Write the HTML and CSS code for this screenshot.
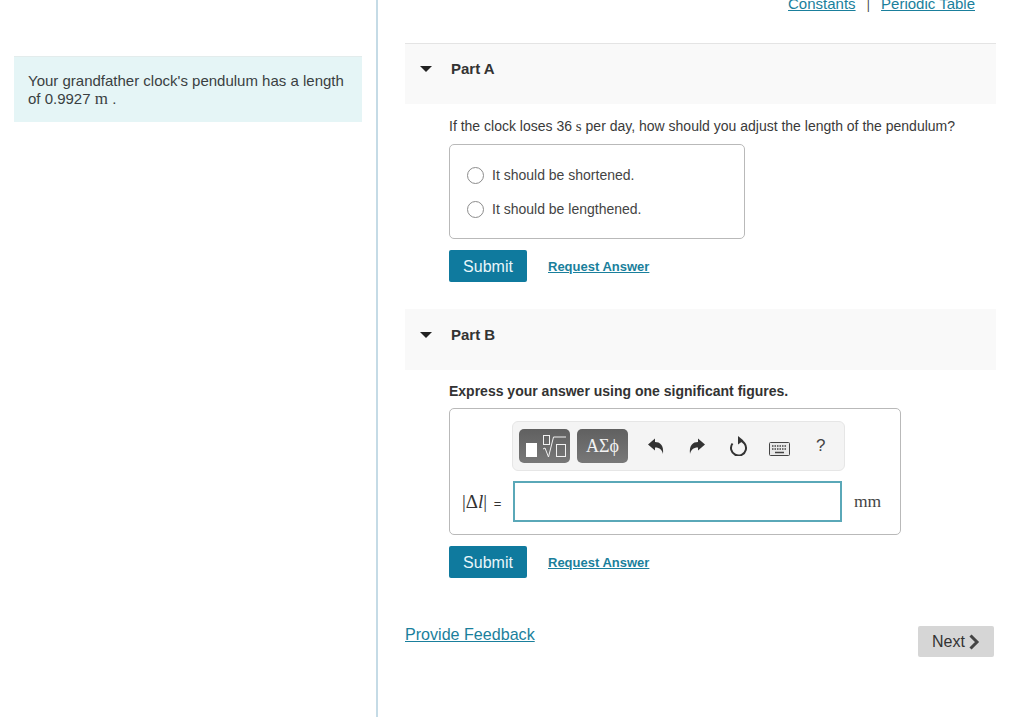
FILE: index.html
```html
<!DOCTYPE html>
<html lang="en">
<head>
    <meta charset="UTF-8">
    <title>Pendulum</title>
    <link rel="stylesheet" href="styles.css">
</head>
<body>
    <div class="container">
        <div class="left-col">
            <div class="intro">Your grandfather clock's pendulum has a length of 0.9927 <span class="math">m</span> .</div>
        </div>
        <div class="right-col">
            <div class="top-links">
                <a href="#">Constants</a>
                <span class="sep">|</span>
                <a href="#">Periodic Table</a>
            </div>

            <div class="part-head">
                <span class="caret"></span>
                <span class="part-title">Part A</span>
            </div>
            <div class="part-body">
                <p class="question">If the clock loses 36 <span class="math">s</span> per day, how should you adjust the length of the pendulum?</p>
                <div class="choices">
                    <label class="choice"><span class="radio"></span>It should be shortened.</label>
                    <label class="choice"><span class="radio"></span>It should be lengthened.</label>
                </div>
                <div class="actions">
                    <button class="submit">Submit</button>
                    <a class="request" href="#">Request Answer</a>
                </div>
            </div>

            <div class="part-head part-b">
                <span class="caret"></span>
                <span class="part-title">Part B</span>
            </div>
            <div class="part-body">
                <p class="express">Express your answer using one significant figures.</p>
                <div class="answer-box">
                    <div class="toolbar">
                        <span class="tool-btn">
                            <svg width="51" height="34" viewBox="0 0 51 34">
                                <rect x="7" y="14" width="11" height="14" fill="#fff"/>
                                <rect x="24.500" y="6.500" width="6" height="9" fill="none" stroke="#f2f2f2"/>
                                <path d="M24 20l2-1l3.500 9l5-20h12.500" fill="none" stroke="#f2f2f2"/>
                                <rect x="37.500" y="15.500" width="9" height="12" fill="none" stroke="#f2f2f2"/>
                            </svg>
                        </span>
                        <span class="tool-btn tool-greek">ΑΣϕ</span>
                        <svg class="tool-undo" width="16" height="17" viewBox="0 0 16 17">
                            <path d="M0 6.500l7-6v3.500c5 0 9 3 8 12c-1-4-3-6.500-8-6.500v3z" fill="#333"/>
                        </svg>
                        <svg class="tool-redo" width="16" height="17" viewBox="0 0 16 17">
                            <path d="M16 6.500l-7-6v3.500c-5 0-9 3-8 12c1-4 3-6.500 8-6.500v3z" fill="#333"/>
                        </svg>
                        <svg class="tool-reload" width="19" height="20" viewBox="0 0 19 20">
                            <path d="M3.500 7.500A7.500 7.500 0 1 0 10 4.500" fill="none" stroke="#333" stroke-width="2"/>
                            <path d="M9 0l5.500 4.500l-5.500 4z" fill="#333"/>
                        </svg>
                        <svg class="tool-keys" width="21" height="14" viewBox="0 0 21 14">
                            <rect x="0.500" y="0.500" width="20" height="13" rx="1" fill="#e9e9e9" stroke="#444"/>
                            <path d="M3 4h15M3 7h15" stroke="#444" stroke-width="1.500" stroke-dasharray="1.500 1"/>
                            <path d="M6 10.500h9" stroke="#444" stroke-width="1.500"/>
                        </svg>
                        <span class="tool-help">?</span>
                    </div>
                    <div class="answer-row">
                        <span class="answer-label"><span class="math">|Δ<i>l</i>|</span> =</span>
                        <div class="answer-input"></div>
                        <span class="math unit">mm</span>
                    </div>
                </div>
                <div class="actions">
                    <button class="submit">Submit</button>
                    <a class="request" href="#">Request Answer</a>
                </div>
            </div>

            <div class="footer">
                <a class="feedback" href="#">Provide Feedback</a>
                <button class="next">Next
                    <svg width="12" height="16" viewBox="0 0 12 16">
                        <path d="M2.500 1.500l6.500 6.500l-6.500 6.500" fill="none" stroke="#444" stroke-width="3"/>
                    </svg>
                </button>
            </div>
        </div>
    </div>
</body>
</html>
```

FILE: styles.css
```css
* {
    box-sizing: border-box;
}
html, body {
    margin: 0;
    height: 717px;
    overflow: hidden;
    background: #fff;
}
body {
    font-family: "Liberation Sans", Arial, sans-serif;
    font-size: 14px;
    color: #333;
}
a {
    color: #1a7f9c;
}
.math {
    font-family: "Liberation Serif", "DejaVu Serif", serif;
}
.container {
    display: grid;
    grid-template-columns: 378px 1fr;
    height: 717px;
}
.left-col {
    border-right: 2px solid #c5dbe6;
    padding: 56px 14px 0;
}
.intro {
    background: #e5f5f6;
    border-top: 1px solid #e3ecec;
    width: 348px;
    height: 66px;
    padding: 15px 14px 0;
    font-size: 15px;
    line-height: 18px;
    color: #3a3f42;
}
.intro .math {
    font-size: 17px;
}
.right-col {
    padding: 0 28px 0 27px;
}
.top-links {
    height: 48px;
    margin-top: -5px;
    padding-right: 21px;
    text-align: right;
    font-size: 15px;
    line-height: 18px;
    color: #444;
}
.top-links .sep {
    margin: 0 7px;
    font-size: 12px;
}
.part-head {
    display: flex;
    align-items: flex-start;
    height: 61px;
    padding: 16px 0 0 15px;
    background: #f9f9f9;
    border-top: 1px solid #e4e4e4;
}
.part-b {
    border-top: none;
    margin-top: 27px;
    padding-top: 17px;
}
.caret {
    width: 0;
    height: 0;
    margin: 6px 19px 0 0;
    border-left: 6px solid transparent;
    border-right: 6px solid transparent;
    border-top: 6px solid #222;
}
.part-title {
    font-size: 15px;
    font-weight: bold;
    line-height: 18px;
    color: #333;
}
.part-body {
    padding-left: 44px;
}
.question {
    margin: 0;
    padding-top: 14px;
    height: 40px;
    font-size: 14px;
    line-height: 17px;
    color: #3a3a3a;
}
.question .math {
    font-size: 15px;
}
.choices {
    width: 296px;
    height: 95px;
    padding: 13px 17px 0;
    border: 1px solid #b9b9b9;
    border-radius: 5px;
}
.choice {
    display: flex;
    align-items: center;
    height: 34px;
    font-size: 14px;
    color: #444;
}
.radio {
    width: 17px;
    height: 17px;
    margin-right: 8px;
    border: 1.500px solid #8c8c8c;
    border-radius: 50%;
}
.actions {
    display: flex;
    align-items: center;
    margin-top: 11px;
}
.submit {
    width: 78px;
    height: 32px;
    padding: 2px 0 0;
    border: none;
    border-radius: 2px;
    background: #0f7a9e;
    color: #e8f6fa;
    font-family: inherit;
    font-size: 16px;
}
.request {
    margin-left: 21px;
    font-size: 13px;
    font-weight: bold;
}
.express {
    margin: 0;
    padding-top: 12px;
    height: 38px;
    font-size: 14px;
    font-weight: bold;
    line-height: 18px;
    color: #333;
}
.answer-box {
    width: 452px;
    height: 127px;
    padding: 12px 0 0 12px;
    border: 1px solid #b9b9b9;
    border-radius: 5px;
}
.toolbar {
    display: flex;
    align-items: center;
    width: 333px;
    height: 50px;
    margin-left: 50px;
    padding-left: 6px;
    background: #f4f4f4;
    border: 1px solid #e6e6e6;
    border-radius: 6px;
}
.tool-btn {
    display: flex;
    align-items: center;
    justify-content: center;
    width: 51px;
    height: 34px;
    border-radius: 5px;
    background: linear-gradient(#606060, #787878);
    color: #f2f2f2;
}
.tool-greek {
    margin-left: 7px;
    font-family: "Liberation Serif", serif;
    font-size: 18px;
}
.tool-undo {
    margin-left: 20px;
}
.tool-redo {
    margin-left: 25px;
}
.tool-reload {
    margin-left: 24px;
}
.tool-keys {
    margin: 5px 0 0 21px;
}
.tool-help {
    margin-left: 26px;
    font-size: 17px;
    color: #444;
}
.answer-row {
    display: flex;
    align-items: center;
    margin-top: 10px;
}
.answer-label {
    width: 51px;
    font-size: 13px;
    white-space: nowrap;
}
.answer-label .math {
    margin-right: 3px;
    font-size: 19px;
}
.answer-input {
    width: 329px;
    height: 41px;
    border: 2px solid #5aa8b8;
    background: #fff;
}
.unit {
    margin-left: 12px;
    font-size: 17.500px;
    color: #444;
}
.footer {
    display: flex;
    justify-content: space-between;
    align-items: flex-start;
    margin-top: 48px;
    padding-right: 2px;
}
.feedback {
    font-size: 16.100px;
    line-height: 18px;
    margin-top: -1px;
}
.next {
    display: flex;
    align-items: center;
    justify-content: center;
    gap: 3px;
    width: 76px;
    height: 31px;
    padding: 0;
    border: none;
    border-radius: 2px;
    background: #d6d6d6;
    color: #333;
    font-family: inherit;
    font-size: 16px;
}
```
